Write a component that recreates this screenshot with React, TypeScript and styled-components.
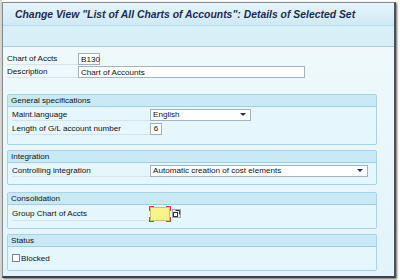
import React from 'react'
import styled, { createGlobalStyle } from 'styled-components'

const GlobalStyle = createGlobalStyle`
  html, body {
    margin: 0;
    padding: 0;
    background: #ffffff;
  }
  body {
    font-family: 'Liberation Sans', Arial, sans-serif;
  }
`

const Page = styled.div`
  width: 400px;
  height: 280px;
  padding: 2px 0 0 2px;
  box-sizing: border-box;
  background: linear-gradient(to right, #d8d8d8 0, #d8d8d8 2px, #ffffff 2px);
`

const Window = styled.div`
  width: 391px;
  height: 273px;
  border: 1px solid #8a8a8a;
  border-right: 2px solid #505050;
  border-bottom: 2px solid #404040;
  box-shadow: 1px 1px 2px rgba(0, 0, 0, 0.6);
  display: flex;
  flex-direction: column;
  background: linear-gradient(to bottom, #f2fafd, #e2f4fa);
  overflow: hidden;
`

const TitleBar = styled.div`
  height: 22px;
  flex-shrink: 0;
  display: flex;
  align-items: center;
  padding-left: 12px;
  background: linear-gradient(to bottom, #e6f4fb, #cfe9f5);
  border-bottom: 1px solid #b9dbea;
  color: #1d2c4c;
  font-size: 10.4px;
  font-weight: bold;
  font-style: italic;
  white-space: nowrap;
`

const Toolbar = styled.div`
  height: 20px;
  flex-shrink: 0;
  background: #d8eff8;
  border-bottom: 1px solid #a9cddd;
`

const Content = styled.div`
  flex: 1;
  padding: 6px 0 0 4px;
  display: flex;
  flex-direction: column;
`

const HeadRows = styled.div`
  display: flex;
  flex-direction: column;
  gap: 1px;
  margin-bottom: 16px;
`

const Row = styled.div<{ h?: number }>`
  height: ${(p) => p.h ?? 13}px;
  flex-shrink: 0;
  display: flex;
  align-items: center;
  font-size: 8.1px;
  color: #111;
`

const Label = styled.div<{ w: number }>`
  width: ${(p) => p.w}px;
  height: 100%;
  box-sizing: border-box;
  display: flex;
  align-items: center;
  border-bottom: 1px solid #d4e4ea;
  white-space: nowrap;
`

const TextField = styled.div<{ w: number; center?: boolean }>`
  width: ${(p) => p.w}px;
  height: 12px;
  box-sizing: border-box;
  background: #ffffff;
  border: 1px solid #9fb4c0;
  display: flex;
  align-items: center;
  justify-content: ${(p) => (p.center ? 'center' : 'flex-start')};
  padding-left: ${(p) => (p.center ? 0 : 2)}px;
  font-size: 8.1px;
  color: #111;
`

const SelectField = styled(TextField)`
  justify-content: space-between;
  padding-right: 4px;
`

const Arrow = styled.span`
  width: 0;
  height: 0;
  border-left: 3px solid transparent;
  border-right: 3px solid transparent;
  border-top: 3px solid #1d2c6a;
`

const Group = styled.div<{ mb: number }>`
  width: 370px;
  flex-shrink: 0;
  margin-bottom: ${(p) => p.mb}px;
  box-sizing: border-box;
  border: 1px solid #a4d3ea;
  border-radius: 2px;
  background: #e5f6fc;
  display: flex;
  flex-direction: column;
`

const GroupHeader = styled.div`
  height: 11px;
  display: flex;
  align-items: center;
  padding-left: 3px;
  background: #c9e9f7;
  border-bottom: 1px solid #9fcde5;
  font-size: 8.1px;
  color: #111;
`

const GroupBody = styled.div<{ h: number; pt: number }>`
  height: ${(p) => p.h}px;
  padding: ${(p) => p.pt}px 0 0 4px;
  box-sizing: border-box;
  display: flex;
  flex-direction: column;
  gap: 1px;
`

const RequiredWrap = styled.div`
  position: relative;
  width: 20px;
  height: 14px;
  background: #f7f48a;
  box-sizing: border-box;
  border: 1px solid #c9c66a;
`

const Corner = styled.span<{ v: 'top' | 'bottom'; hz: 'left' | 'right' }>`
  position: absolute;
  width: 4px;
  height: 4px;
  ${(p) => p.v}: -2px;
  ${(p) => p.hz}: -2px;
  border-${(p) => p.v}: 1px solid #d43a3a;
  border-${(p) => p.hz}: 1px solid #d43a3a;
`

const HelpButton = styled.div`
  width: 9px;
  height: 9px;
  margin-left: 2px;
  display: flex;
  align-items: center;
  justify-content: center;
  background: #e8eef2;
  border: 1px solid #9aa8b2;
  box-sizing: border-box;
`

const CheckBox = styled.span`
  width: 8px;
  height: 8px;
  box-sizing: border-box;
  border: 1px solid #6f8794;
  background: #ffffff;
  margin-right: 1px;
`

const App = () => {
  return (
    <>
      <GlobalStyle />
      <Page>
        <Window>
          <TitleBar>Change View "List of All Charts of Accounts": Details of Selected Set</TitleBar>
          <Toolbar />
          <Content>
            <HeadRows>
              <Row h={12}>
                <Label w={71}>Chart of Accts</Label>
                <TextField w={22}>B130</TextField>
              </Row>
              <Row h={12}>
                <Label w={71}>Description</Label>
                <TextField w={227}>Chart of Accounts</TextField>
              </Row>
            </HeadRows>

            <Group mb={5}>
              <GroupHeader>General specifications</GroupHeader>
              <GroupBody h={37} pt={1}>
                <Row>
                  <Label w={138}>Maint.language</Label>
                  <SelectField w={101}>
                    English
                    <Arrow />
                  </SelectField>
                </Row>
                <Row>
                  <Label w={138}>Length of G/L account number</Label>
                  <TextField w={12} center>
                    6
                  </TextField>
                </Row>
              </GroupBody>
            </Group>

            <Group mb={7}>
              <GroupHeader>Integration</GroupHeader>
              <GroupBody h={21} pt={1}>
                <Row>
                  <Label w={138}>Controlling integration</Label>
                  <SelectField w={218}>
                    Automatic creation of cost elements
                    <Arrow />
                  </SelectField>
                </Row>
              </GroupBody>
            </Group>

            <Group mb={5}>
              <GroupHeader>Consolidation</GroupHeader>
              <GroupBody h={23} pt={1}>
                <Row h={15}>
                  <Label w={138}>Group Chart of Accts</Label>
                  <RequiredWrap>
                    <Corner v="top" hz="left" />
                    <Corner v="top" hz="right" />
                    <Corner v="bottom" hz="left" />
                    <Corner v="bottom" hz="right" />
                  </RequiredWrap>
                  <HelpButton>
                    <svg width="7" height="7" viewBox="0 0 7 7">
                      <rect x="0.5" y="2.5" width="4" height="4" fill="#fff" stroke="#333" strokeWidth="1" />
                      <path d="M2.5 0.5 H6.5 V4.5" fill="none" stroke="#333" strokeWidth="1" />
                    </svg>
                  </HelpButton>
                </Row>
              </GroupBody>
            </Group>

            <Group mb={0}>
              <GroupHeader>Status</GroupHeader>
              <GroupBody h={23} pt={5}>
                <Row h={12}>
                  <CheckBox />
                  Blocked
                </Row>
              </GroupBody>
            </Group>
          </Content>
        </Window>
      </Page>
    </>
  )
}

export default App
